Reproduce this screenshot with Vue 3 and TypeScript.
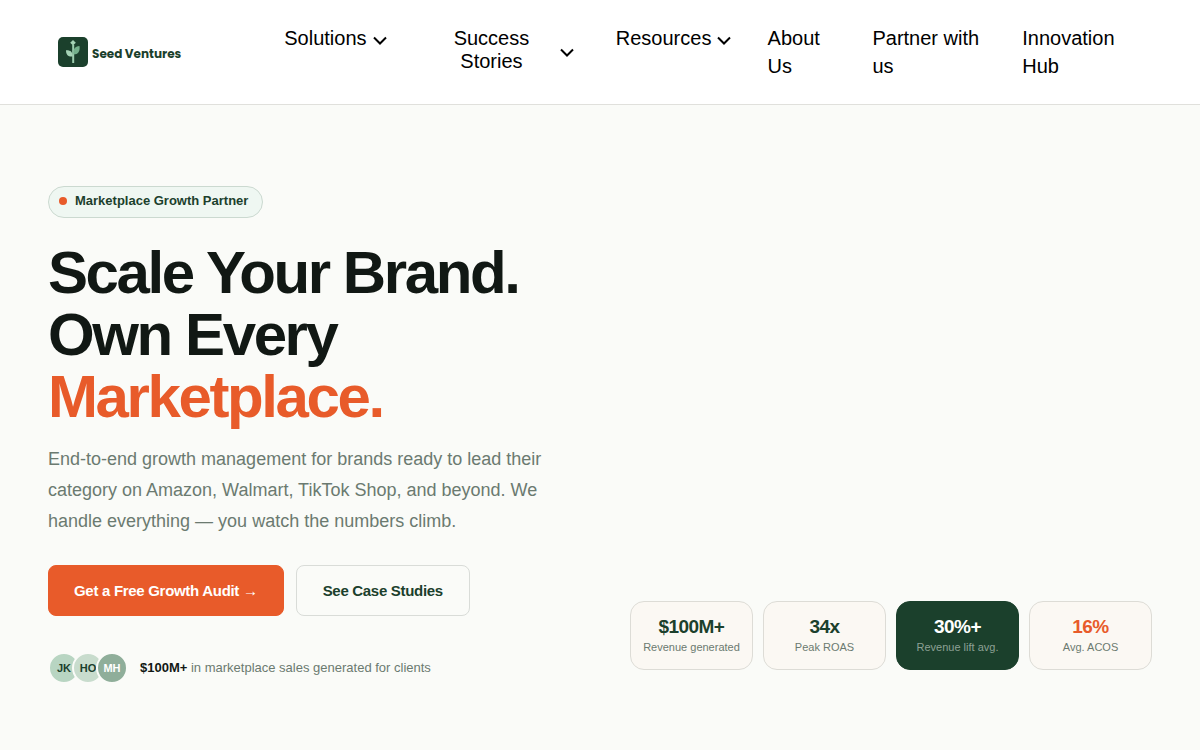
<script setup lang="ts">
interface NavItem {
  label: string
  menu: boolean
}

interface Stat {
  value: string
  label: string
  tone: 'plain' | 'dark' | 'accent'
}

const navItems: NavItem[] = [
  { label: 'Solutions', menu: true },
  { label: 'Success Stories', menu: true },
  { label: 'Resources', menu: true },
  { label: 'About Us', menu: false },
  { label: 'Partner with us', menu: false },
  { label: 'Innovation Hub', menu: false },
]

const avatars: string[] = ['JK', 'HO', 'MH']

const stats: Stat[] = [
  { value: '$100M+', label: 'Revenue generated', tone: 'plain' },
  { value: '34x', label: 'Peak ROAS', tone: 'plain' },
  { value: '30%+', label: 'Revenue lift avg.', tone: 'dark' },
  { value: '16%', label: 'Avg. ACOS', tone: 'accent' },
]
</script>

<template>
  <div class="page">
    <header class="header">
      <a class="logo" href="#">
        <svg class="logo-mark" viewBox="0 0 30 30" aria-hidden="true">
          <rect width="30" height="30" rx="5" fill="#1b402c" />
          <path d="M15.200 26V8" stroke="#9ccdae" stroke-width="2" fill="none" />
          <path d="M15 3l2.800 2.800L15 8.600l-2.800-2.800z" fill="#a5d3b5" />
          <path d="M14.800 19.500C10 20 8 17.500 8 13.200c4.500-.2 6.800 1.800 6.800 6.300z" fill="#a5d3b5" />
          <path d="M15.500 17.500c-.8-5.500 1.300-8 6-8.500 .7 5.500-1.300 8.500-6 8.500z" fill="#74b08b" />
        </svg>
        <span class="logo-name">Seed Ventures</span>
      </a>
      <nav aria-label="Main">
        <ul class="nav">
          <li v-for="item in navItems" :key="item.label">
            <button v-if="item.menu" class="nav-button" type="button" aria-haspopup="true">
              <span class="nav-label">{{ item.label }}</span>
              <svg class="chevron" viewBox="0 0 14 10" aria-hidden="true">
                <path d="M1 1.500l6 6 6-6" fill="none" stroke="#000" stroke-width="2" />
              </svg>
            </button>
            <a v-else class="nav-link" href="#">{{ item.label }}</a>
          </li>
        </ul>
      </nav>
    </header>

    <main class="hero">
      <section class="intro">
        <p class="badge"><span class="dot"></span>Marketplace Growth Partner</p>
        <h1>Scale Your Brand.<br />Own Every<br /><span class="accent">Marketplace.</span></h1>
        <p class="lead">
          End-to-end growth management for brands ready to lead their category on Amazon, Walmart,
          TikTok Shop, and beyond. We handle everything — you watch the numbers climb.
        </p>
        <div class="actions">
          <a class="btn primary" href="#">Get a Free Growth Audit →</a>
          <a class="btn secondary" href="#">See Case Studies</a>
        </div>
        <div class="trust">
          <div class="avatars">
            <span v-for="name in avatars" :key="name" class="avatar">{{ name }}</span>
          </div>
          <p><strong>$100M+</strong> in marketplace sales generated for clients</p>
        </div>
      </section>

      <section class="results" aria-label="Results">
        <div v-for="stat in stats" :key="stat.label" class="stat" :class="stat.tone">
          <strong>{{ stat.value }}</strong>
          <span>{{ stat.label }}</span>
        </div>
      </section>
    </main>
  </div>
</template>

<style>
body {
  margin: 0;
  background: #fafbf8;
}
</style>

<style scoped>
.page {
  font-family: 'Liberation Sans', Arial, sans-serif;
  color: #111814;
}

.page * {
  box-sizing: border-box;
}

a {
  color: inherit;
  text-decoration: none;
}

p,
h1,
ul {
  margin: 0;
  padding: 0;
}

.header {
  display: flex;
  gap: 103px;
  padding: 24px 58px;
  background: #fff;
  border-bottom: 1px solid #e0e0dc;
}

.logo {
  display: flex;
  align-items: center;
  gap: 4px;
  flex: 0 0 122px;
}

.logo-mark {
  width: 30px;
  height: 30px;
  flex: none;
}

.logo-name {
  padding-top: 4px;
  font: 700 12px/16px Poppins, Inter, sans-serif;
  color: #1b402c;
  white-space: nowrap;
}

nav {
  flex: 1;
}

.nav {
  display: grid;
  grid-template-columns: 109fr 151fr 116fr 69fr 114fr 120fr;
  column-gap: 36px;
  list-style: none;
  font-size: 20px;
  line-height: 28px;
  color: #000;
}

.nav li:nth-child(2) {
  padding-right: 6px;
}

.nav-button {
  display: flex;
  align-items: center;
  gap: 6px;
  padding: 3px 0 0;
  border: 0;
  background: none;
  font: inherit;
  line-height: 23px;
  color: inherit;
  cursor: pointer;
}

.chevron {
  width: 14px;
  height: 10px;
  flex: none;
  margin-top: 5px;
}

.nav-link {
  display: block;
}

.hero {
  display: grid;
  grid-template-columns: 1fr 1fr;
  align-items: center;
  gap: 60px;
  padding: 81px 48px 64px;
}

.intro {
  display: flex;
  flex-direction: column;
  align-items: flex-start;
}

.badge {
  display: inline-flex;
  align-items: center;
  gap: 8px;
  padding: 7px 14px 9px 10px;
  border: 1px solid #cbd9d0;
  border-radius: 16px;
  background: #eff7f2;
  font-size: 13px;
  font-weight: 700;
  line-height: 14px;
  color: #1b402c;
}

.dot {
  width: 8px;
  height: 8px;
  border-radius: 50%;
  background: #e85b2a;
}

h1 {
  margin-top: 24px;
  font-size: 60px;
  font-weight: 700;
  line-height: 1.03;
  letter-spacing: -0.04em;
}

.accent {
  color: #e85b2a;
}

.lead {
  margin-top: 17px;
  font-size: 18px;
  line-height: 1.7;
  color: #6b7a70;
}

.actions {
  display: flex;
  gap: 12px;
  margin-top: 29px;
}

.btn {
  padding: 16px 25px;
  border: 1px solid transparent;
  border-radius: 8px;
  font-size: 15px;
  font-weight: 700;
  line-height: 17px;
  letter-spacing: -0.02em;
}

.primary {
  background: #e85b2a;
  border-color: #e85b2a;
  color: #fff;
}

.secondary {
  padding-inline: 26px;
  border-color: #d9dcd8;
  color: #1b402c;
}

.trust {
  display: flex;
  align-items: center;
  gap: 12px;
  margin-top: 36px;
  font-size: 13px;
  line-height: 16px;
  color: #6b7a70;
}

.trust strong {
  color: #111814;
}

.avatars {
  display: flex;
}

.avatar {
  width: 32px;
  height: 32px;
  border: 2px solid #fafbf8;
  border-radius: 50%;
  background: #b8d5c2;
  font-size: 11px;
  font-weight: 700;
  line-height: 28px;
  text-align: center;
  color: #1b402c;
}

.avatar + .avatar {
  margin-left: -8px;
}

.avatar:nth-child(2) {
  background: #c8dccd;
}

.avatar:nth-child(3) {
  background: #8fae9a;
  color: #fff;
}

.results {
  display: grid;
  grid-template-columns: repeat(4, 1fr);
  align-items: end;
  gap: 10px;
  min-height: 469px;
}

.stat {
  display: flex;
  flex-direction: column;
  gap: 3px;
  padding: 14px 10px 15px;
  border: 1px solid #dddcd6;
  border-radius: 14px;
  background: #fbf8f3;
  text-align: center;
}

.stat strong {
  font-size: 19px;
  line-height: 22px;
  letter-spacing: -0.03em;
  color: #1b402c;
}

.stat span {
  font-size: 11px;
  line-height: 13px;
  color: #6b7a70;
}

.stat.dark {
  background: #1b402c;
  border-color: #1b402c;
}

.stat.dark strong {
  color: #fff;
}

.stat.dark span {
  color: #8da095;
}

.stat.accent strong {
  color: #e85b2a;
}
</style>
